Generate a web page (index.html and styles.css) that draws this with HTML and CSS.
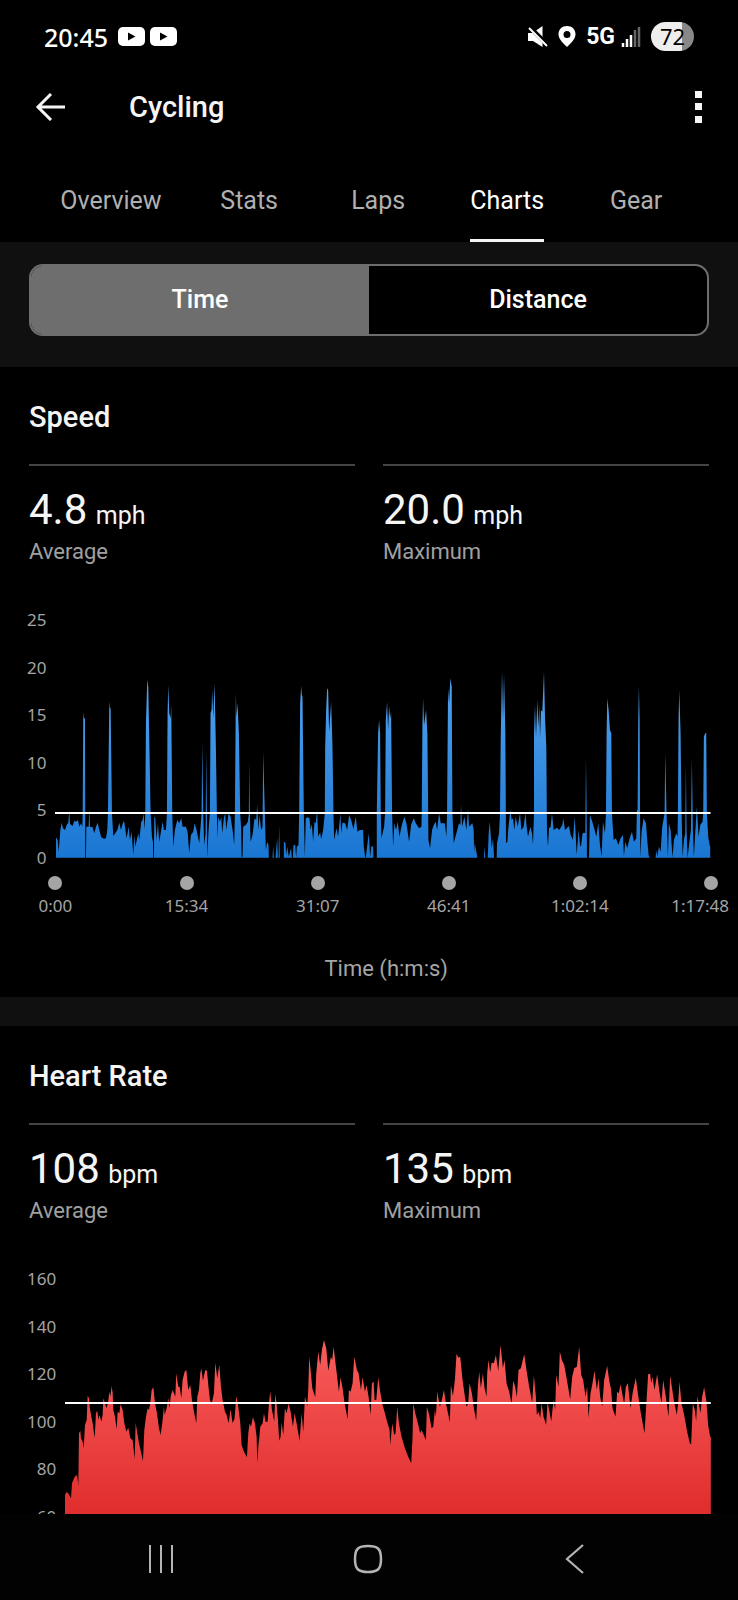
FILE: index.html
```html
<!DOCTYPE html>
<html lang="en">

<head>
    <meta charset="utf-8">
    <meta name="viewport" content="width=device-width, initial-scale=1">
    <title>Cycling</title>
    <link rel="stylesheet" href="styles.css">
</head>

<body>
    <div class="status-bar">
        <span class="clock">20:45</span>
        <svg class="icon-video" viewBox="0 0 27 19" width="27" height="19">
            <rect width="27" height="19" rx="5" fill="#fff" />
            <path d="M10 5.500L17.500 9.500L10 13.500Z" fill="#000" />
        </svg>
        <svg class="icon-video" viewBox="0 0 27 19" width="27" height="19">
            <rect width="27" height="19" rx="5" fill="#fff" />
            <path d="M10 5.500L17.500 9.500L10 13.500Z" fill="#000" />
        </svg>
        <div class="status-right">
            <svg viewBox="0 0 20 21" width="20" height="21">
                <path d="M6 6L14.500 0V11Z" fill="#fff" />
                <path d="M0 -1L20 19" stroke="#000" stroke-width="4" />
                <path d="M0 7V15H5L14.500 21V17L4.500 7Z" fill="#fff" />
                <path d="M1 2L19 20" stroke="#fff" stroke-width="2" />
            </svg>
            <svg viewBox="0 0 18 21" width="18" height="21">
                <path fill="#fff" fill-rule="evenodd" d="M9 0C4 0 .5 3.500 .5 8.200C.5 13 5 17 9 21C13 17 17.500 13 17.500 8.200C17.500 3.500 14 0 9 0ZM9 5A3.500 3.500 0 1 1 9 12A3.500 3.500 0 1 1 9 5Z" />
            </svg>
            <span class="network">5G
                <svg viewBox="0 0 20 21" width="20" height="21">
                    <path d="M2 17V21M6 13V21M10 9V21" stroke="#fff" stroke-width="2.500" />
                    <path d="M14 4V21M18 1V21" stroke="#666" stroke-width="2.500" />
                </svg>
            </span>
            <span class="battery">72</span>
        </div>
    </div>

    <header class="app-bar">
        <button class="icon-button" aria-label="Back">
            <svg viewBox="0 0 30 28" width="30" height="28" fill="none" stroke="#f5f5f5" stroke-width="3">
                <path d="M30 14H2M16 1L3 14L16 27" />
            </svg>
        </button>
        <h1>Cycling</h1>
        <button class="icon-button" aria-label="More options">
            <svg viewBox="0 0 7 32" width="7" height="32" fill="#f5f5f5">
                <path d="M0 0H7V7H0ZM0 12H7V19H0ZM0 25H7V32H0Z" />
            </svg>
        </button>
    </header>

    <nav class="tabs">
        <a href="#overview"><span>Overview</span></a>
        <a href="#stats"><span>Stats</span></a>
        <a href="#laps"><span>Laps</span></a>
        <a href="#charts" class="active"><span>Charts</span></a>
        <a href="#gear"><span>Gear</span></a>
    </nav>

    <main>
        <div class="toggle-wrap">
            <div class="toggle">
                <button class="selected">Time</button>
                <button>Distance</button>
            </div>
        </div>

        <section class="card">
            <h2>Speed</h2>
            <div class="stats">
                <div class="stat">
                    <p class="value">4.8 <span>mph</span></p>
                    <p class="label">Average</p>
                </div>
                <div class="stat">
                    <p class="value">20.0 <span>mph</span></p>
                    <p class="label">Maximum</p>
                </div>
            </div>
            <div class="chart">
                <div class="y-axis">
                    <span>25</span>
                    <span>20</span>
                    <span>15</span>
                    <span>10</span>
                    <span>5</span>
                    <span>0</span>
                </div>
                <svg class="plot" viewBox="105 60 1968 714" preserveAspectRatio="none">
                    <defs>
                        <linearGradient id="speed-fill" gradientUnits="userSpaceOnUse" x1="0" y1="200" x2="0" y2="773">
                            <stop offset="0" stop-color="#56a5f0" />
                            <stop offset="1" stop-color="#1976d2" />
                        </linearGradient>
                    </defs>
                    <path fill="url(#speed-fill)" d="M108 773V712L113 720L116 755L121 690L125 668L129 685L135 690L140 675L145 668L148 630L150 672L158 678L163 662L168 665L174 660L178 680L183 670L187 680L188 640L190 335L192 355H195L196 773H198L199 680H206L208 625L210 680L218 682L223 700L228 680L233 668L238 690L244 712L252 716L258 715L262 690L264 640L268 305L270 325H272L276 640L280 708L286 700L293 688L298 668L303 690L310 665H313L320 715L326 680L330 720L335 695L340 765L343 705L346 740L355 700L358 720L364 665L368 660L371 640L374 690L376 640L378 370L382 240L385 260L388 420L392 640L396 710L399 725L400 773H402L403 650L406 655L410 720L414 670L418 725L424 690L428 665L432 690H438L441 640L443 340L445 255L448 340L452 355L454 315L457 640L460 740L465 690L472 660L478 670L484 655L488 680H498L503 695L508 760L513 705L520 695L524 670L530 690L538 730L542 680L545 640L547 430L550 640L553 735L557 700L559 455L561 640L562 773L566 690L570 640L572 340L575 330L577 270L580 355L584 250L588 440L591 640L593 715L595 650L600 665L604 650L607 700L612 655L616 640L619 690L626 640L632 650L638 690L643 735L645 640L648 280L650 350L653 310L657 400L661 640L664 690L665 770H668L670 680L678 675L684 665L687 640L688 485L690 640L692 725L698 705L704 655L709 660L712 615L716 690L719 645L724 690L728 680L730 455L735 640L738 750L742 725L746 735L747 773
                        H758L760 738L762 773H767L772 713L774 773H776L778 675L780 773H792V725L797 728L799 765L802 740L807 770L812 750L814 745L816 773H819L821 735H826L829 773L831 740L836 735L838 640L841 310L844 258L846 285L848 290L852 640L855 773L858 655L864 652L869 655L872 690L876 672L880 725L884 665L888 670L892 630L895 710L901 697L904 718L910 690L915 640L916 445L919 330L922 265L925 270L928 395L934 305L938 440L941 640L943 720L950 685L955 710L962 640L964 700L968 668L976 670L982 690L988 645L994 660L1001 688L1008 650L1013 695L1020 690H1030L1032 740L1036 770L1038 773L1042 740L1047 700L1051 770L1055 738L1060 740L1061 773H1071V640L1075 400L1078 360L1081 400L1083 640L1085 715L1093 680L1096 640L1098 360L1102 305L1105 390L1108 318L1111 355L1114 335L1117 640L1120 740L1124 670L1129 690L1134 665L1139 710L1145 680L1149 665L1154 650L1160 670L1168 725L1174 675L1182 655L1188 670L1198 685L1205 680L1206 640L1208 380L1210 295L1213 375L1219 330L1223 400L1226 720L1231 745L1237 690L1242 675L1248 665L1252 690L1258 640L1263 670H1275L1280 710L1282 640L1285 265L1288 310L1292 235L1296 260L1298 640L1302 730L1310 700L1318 670L1322 675L1324 615L1327 680L1334 650L1340 690L1345 628L1348 680L1358 670L1362 690L1363 760L1365 730L1370 755L1373 773
                        H1393L1394 740L1397 773H1404L1407 700L1410 665L1416 745L1420 715L1423 773H1431L1432 730L1438 700L1441 640L1443 420L1447 213L1450 360L1453 222L1457 400L1459 730L1463 725L1466 685L1472 630L1476 660L1480 655L1484 690L1488 650L1494 680L1501 640L1505 690L1512 680L1517 640L1521 680L1525 710L1532 680L1537 700L1540 735L1543 640V400L1546 315L1549 415L1553 298L1556 380L1559 315L1561 415L1564 330L1568 335L1573 215L1576 350L1580 440L1582 700L1585 740L1588 685L1593 680L1597 640L1602 690L1612 683L1619 690L1628 675L1631 655L1636 690L1648 678L1653 705L1660 720L1665 650L1668 700L1671 765L1677 690L1681 735L1684 740L1689 700L1697 698L1699 475L1701 640L1702 773H1708L1711 645L1718 665L1725 690L1730 710L1736 670L1741 735L1746 770L1750 665L1756 700L1759 640L1761 400L1763 295L1767 330L1771 390L1775 400L1777 640L1782 720L1789 715L1796 735L1803 715L1810 705L1813 770L1817 725L1823 745L1830 715L1837 695L1843 725L1850 715L1852 630H1854L1856 360L1858 258L1860 360L1862 773L1866 695L1872 655L1879 670L1883 720L1887 765L1890 773H1908L1910 750L1913 770L1918 740L1923 755L1928 680L1935 640L1937 460L1941 640L1945 770L1948 670L1953 690L1959 773L1963 720L1970 700L1974 710L1975 640L1977 360L1979 270L1983 400L1986 640L1989 770L1993 720L1997 700L1999 495L2001 690L2004 773L2009 730L2014 690L2017 475L2020 690L2023 773L2027 700L2032 620L2037 710L2042 675L2049 665L2051 640L2053 410L2057 400L2060 398L2062 640L2066 710L2070 735L2072 740V773Z" />
                    <path d="M105 639H2073" stroke="#fff" stroke-width="6" />
                </svg>
                <div class="x-axis">
                    <span>0:00</span>
                    <span>15:34</span>
                    <span>31:07</span>
                    <span>46:41</span>
                    <span>1:02:14</span>
                    <span>1:17:48</span>
                </div>
                <p class="axis-title">Time (h:m:s)</p>
            </div>
        </section>

        <section class="card">
            <h2>Heart Rate</h2>
            <div class="stats">
                <div class="stat">
                    <p class="value">108 <span>bpm</span></p>
                    <p class="label">Average</p>
                </div>
                <div class="stat">
                    <p class="value">135 <span>bpm</span></p>
                    <p class="label">Maximum</p>
                </div>
            </div>
            <div class="chart">
                <div class="y-axis">
                    <span>160</span>
                    <span>140</span>
                    <span>120</span>
                    <span>100</span>
                    <span>80</span>
                    <span>60</span>
                </div>
                <svg class="plot" viewBox="135 57 1938 714" preserveAspectRatio="none">
                    <defs>
                        <linearGradient id="heart-fill" gradientUnits="userSpaceOnUse" x1="0" y1="240" x2="0" y2="770">
                            <stop offset="0" stop-color="#f95c5c" />
                            <stop offset="1" stop-color="#e02c2c" />
                        </linearGradient>
                    </defs>
                    <path fill="url(#heart-fill)" d="M135 770V705L140 695L146 702L153 715L156 670L162 655L168 645L172 650L175 675L177 520L181 512L183 535L188 545L191 565L195 495L200 480L203 408L207 415L209 440L213 465L218 490L224 535L228 460L232 452L235 480L239 465L244 485L248 465L250 415L255 430L259 445L264 430L268 395L271 410L275 378L278 400L280 450L285 470L290 508L293 455L298 460L302 432L308 450L313 490L319 515L325 503L331 535L338 540L344 598L347 488L352 520L357 550L363 575L369 603L373 510L378 470L383 445L387 450L391 430L395 390L400 382L405 430L411 460L417 505L422 525L428 480L432 438L434 465L440 445L445 415L448 445L453 405L458 390L462 400L466 410L469 340L475 380H479L484 415L488 360L494 335L499 330L505 390L511 375L516 420L522 455L529 490L532 410L537 390L541 340L544 325L549 362L556 330L561 332L566 385L570 420L575 432L582 400L586 308L592 355L598 315L603 380L608 420L615 455L620 465L626 490L632 448L638 490L644 475L649 408L655 440L661 490L665 555L672 575L681 592L685 520L689 490L693 500L699 472L705 490L710 530L712 608L716 550
                        L718 535L721 500L728 490L732 460L737 485H743L747 430L751 393L756 450L763 485L766 402L770 430L774 480L778 542L782 530L785 487L790 525L795 445L800 460L806 430L812 455L819 500L824 460L830 490L839 543L845 460L850 515L855 410L862 438L865 390L868 290L873 340L877 385L886 412L889 340L895 275L901 315L906 270L912 240L919 265L925 332L933 290L937 300L941 260L948 320L957 395L962 352L968 385L974 430L983 478L987 390L992 395L998 370L1003 290L1011 330L1016 340L1023 390L1028 352L1035 395L1040 375L1046 410L1052 465L1056 370L1061 365L1064 420H1069L1075 352L1080 390L1088 435L1095 460L1103 490L1109 510L1111 555L1117 490L1123 525L1127 520L1132 440L1137 490L1145 530L1155 565L1165 590L1174 610L1178 530L1180 430L1186 460L1194 490L1201 520L1205 510L1218 540L1221 440L1228 465L1235 505L1240 500L1245 450L1248 470L1252 395L1260 440L1266 420L1272 390L1278 430L1290 487L1293 375L1299 408L1305 360L1310 282L1316 293L1321 290L1328 360L1335 410L1340 440L1345 430L1349 370L1356 400L1362 445L1369 482L1374 380L1378 335L1383 385L1389 340L1394 385L1400 410
                        L1402 340L1406 300L1411 338L1415 308L1422 310L1428 285L1435 333L1442 255L1449 325L1454 300L1460 370L1468 395L1475 433L1480 362L1486 380L1491 412L1496 330L1503 325L1513 283L1519 325L1527 375L1537 428L1542 347L1548 410L1551 465L1556 455L1561 475L1565 430L1571 470L1579 495L1583 425L1588 450L1594 485L1601 420L1606 450L1609 345L1616 380L1620 275L1626 300L1633 315L1642 365L1651 418L1657 350L1663 325L1671 320L1678 260L1684 345L1690 360L1697 410L1702 380L1706 475L1712 400L1718 370L1724 332L1731 390L1736 355L1741 410L1747 440L1753 360L1762 318L1768 360L1774 390L1778 445L1787 470L1792 395L1797 400L1802 373L1813 432L1818 380L1824 370L1832 445L1839 395L1848 353L1854 400L1863 460L1874 520L1879 440L1885 342H1891L1894 370L1898 350L1904 390L1912 343L1918 390L1925 430L1930 360L1938 410L1946 470L1951 347L1956 380L1962 420L1971 465L1975 430L1979 365L1985 430L1993 465L2002 515L2010 550L2014 553L2019 430L2025 450L2029 483L2033 408L2042 460L2047 410L2053 382L2060 425L2065 495L2071 530H2073V770Z" />
                    <path d="M135 429H2073" stroke="#fff" stroke-width="6" />
                </svg>
            </div>
        </section>
    </main>

    <footer class="nav-bar">
        <button class="icon-button" aria-label="Recent apps">
            <svg viewBox="0 0 30 30" width="30" height="30" fill="none" stroke="#b4b4b4" stroke-width="2">
                <path d="M4 1V29M15 1V29M26 1V29" />
            </svg>
        </button>
        <button class="icon-button" aria-label="Home">
            <svg viewBox="0 0 30 30" width="30" height="30" fill="none" stroke="#b4b4b4" stroke-width="2.500">
                <path d="M15 2C25 2 28 5 28 15C28 25 25 28 15 28C5 28 2 25 2 15C2 5 5 2 15 2Z" />
            </svg>
        </button>
        <button class="icon-button" aria-label="Back">
            <svg viewBox="0 0 30 30" width="30" height="30" fill="none" stroke="#b4b4b4" stroke-width="2.200">
                <path d="M23 1L7 15L23 29" />
            </svg>
        </button>
    </footer>
</body>

</html>
```

FILE: styles.css
```css
* {
    box-sizing: border-box;
}

body {
    display: flex;
    flex-direction: column;
    height: 100vh;
    margin: 0;
    background-color: #000;
    color: #f5f5f5;
    font-family: Roboto, "Liberation Sans", sans-serif;
}

h1,
h2,
p {
    margin: 0;
}

h1,
h2 {
    font-size: 29px;
    font-weight: 500;
    line-height: 40px;
}

button {
    padding: 0;
    border: none;
    background: none;
    color: inherit;
    font: inherit;
    cursor: pointer;
}

svg {
    display: block;
    flex-shrink: 0;
}

/* status bar */
.status-bar {
    display: flex;
    flex-shrink: 0;
    align-items: center;
    height: 73px;
    padding: 0 44px;
    color: #fff;
    font-family: "Noto Sans", sans-serif;
}

.clock {
    margin-right: 10px;
    font-size: 25px;
    font-weight: 500;
}

.icon-video {
    margin-right: 5px;
}

.status-right {
    display: flex;
    align-items: center;
    gap: 10px;
    margin-left: auto;
}

.network {
    display: flex;
    align-items: center;
    gap: 6px;
    font-family: Roboto, sans-serif;
    font-size: 23px;
    font-weight: 700;
}

.battery {
    width: 43px;
    border-radius: 15px;
    background: linear-gradient(to right, #eee 72%, #888 72%);
    color: #000;
    font-size: 22px;
    line-height: 29px;
    text-align: center;
}

/* app bar */
.app-bar {
    display: flex;
    flex-shrink: 0;
    align-items: center;
    height: 67px;
    padding: 0 36px 0 35px;
}

.app-bar h1 {
    flex: 1;
    margin-left: 64px;
}

/* tabs */
.tabs {
    display: flex;
    flex-shrink: 0;
    justify-content: center;
}

.tabs a {
    min-width: 129px;
    padding: 41px 23px 0;
    color: #b0b0b0;
    font-size: 25px;
    line-height: 40px;
    text-align: center;
    text-decoration: none;
}

.tabs span {
    display: inline-block;
    padding-bottom: 18px;
    border-bottom: 3px solid transparent;
    vertical-align: top;
}

.tabs .active {
    color: #fff;
}

.tabs .active span {
    border-color: #f5f5f5;
}

/* scrolling content */
main {
    flex: 1;
    min-height: 0;
    overflow-x: hidden;
    overflow-y: auto;
    scrollbar-width: none;
    background-color: #101010;
}

.toggle-wrap {
    padding: 22px 29px 31px;
}

.toggle {
    display: grid;
    grid-template-columns: 1fr 1fr;
    height: 72px;
    border: 2px solid #6e6e6e;
    border-radius: 14px;
    background-color: #000;
    overflow: hidden;
}

.toggle button {
    padding-bottom: 2px;
    color: #fff;
    font-size: 25px;
    font-weight: 500;
}

.toggle .selected {
    background-color: #6e6e6e;
}

.card {
    margin-bottom: 29px;
    padding: 30px 0 15px;
    background-color: #000;
}

.card h2 {
    padding: 0 29px;
}

.stats {
    display: grid;
    grid-template-columns: 1fr 1fr;
    gap: 28px;
    padding: 27px 29px 0;
}

.stat {
    padding-top: 19px;
    border-top: 2px solid #444;
}

.value {
    font-size: 42px;
    line-height: 50px;
}

.value span {
    margin-left: -2px;
    font-size: 25px;
    line-height: 26px;
}

.label {
    margin-top: 4px;
    color: #a0a0a0;
    font-size: 22px;
    line-height: 26px;
}

/* charts */
.chart {
    display: grid;
    grid-template-columns: auto 1fr;
    column-gap: 9px;
    padding: 55px 27px 0;
    color: #a5a5a5;
    font-family: "Noto Sans", sans-serif;
    font-size: 17px;
    line-height: 20px;
}

.y-axis {
    display: flex;
    flex-direction: column;
    justify-content: space-between;
    margin: -10px 0;
    text-align: right;
}

.plot {
    width: 100%;
    height: 238px;
}

.x-axis {
    display: flex;
    grid-column: 2;
    justify-content: space-between;
    margin: 18px -32px 0;
}

.x-axis span {
    display: flex;
    flex-direction: column;
    align-items: center;
    width: 64px;
}

.x-axis span::before {
    content: "";
    width: 14px;
    height: 14px;
    margin-bottom: 6px;
    border-radius: 50%;
    background-color: #a5a5a5;
}

/* the last label is wider than the space right of its dot */
.x-axis span:last-child {
    align-items: flex-end;
    width: 50px;
    margin-right: 14px;
}

.x-axis span:last-child::before {
    margin-right: 11px;
}

.axis-title {
    grid-column: 2;
    margin-top: 40px;
    padding-left: 6px;
    font-family: Roboto, sans-serif;
    font-size: 22px;
    line-height: 26px;
    text-align: center;
}

/* system navigation */
.nav-bar {
    display: grid;
    flex-shrink: 0;
    grid-template-columns: 1fr 1fr 1fr;
    height: 86px;
    padding: 4px 60px 0 58px;
    background-color: #020202;
}

.nav-bar .icon-button {
    display: flex;
    align-items: center;
    justify-content: center;
}
```
